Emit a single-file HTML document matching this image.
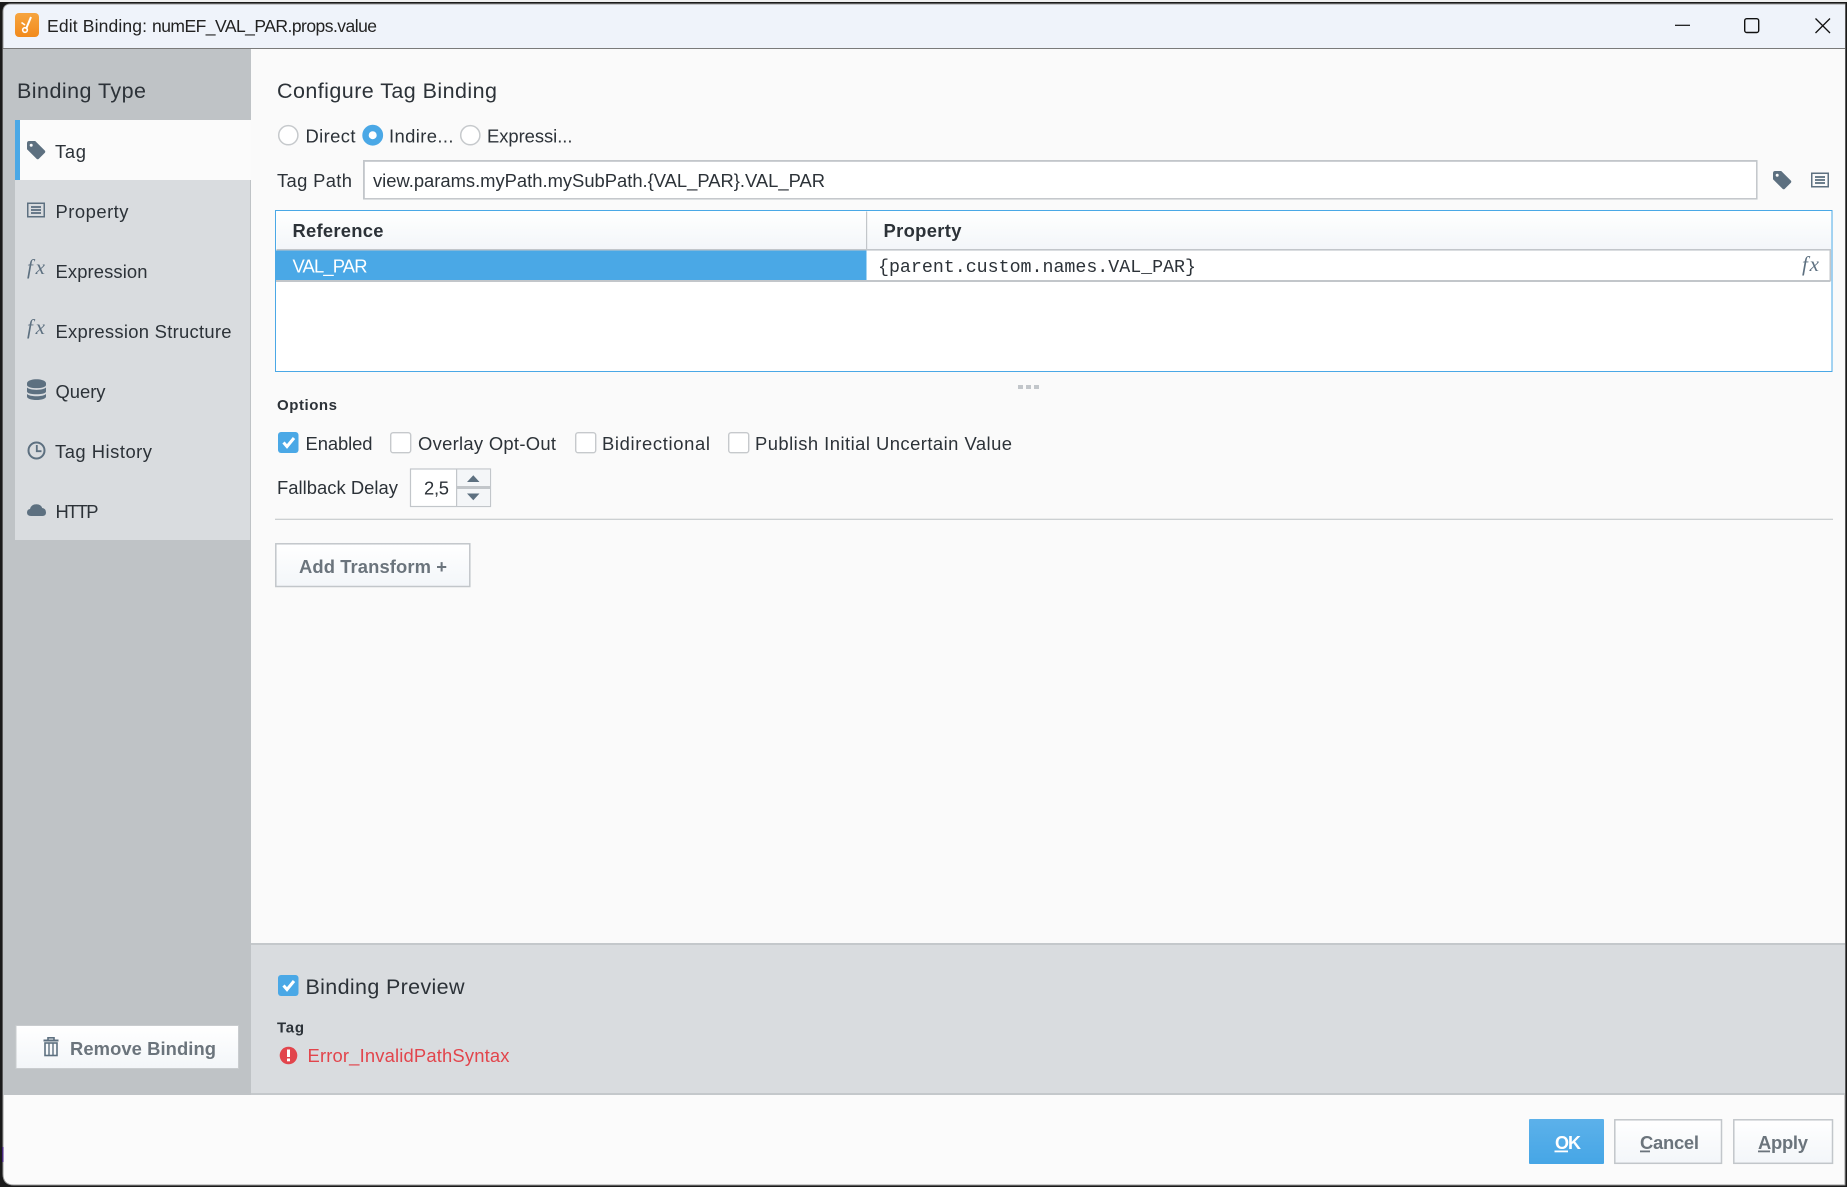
<!DOCTYPE html>
<html lang="en">
<head>
<meta charset="utf-8">
<title>Edit Binding</title>
<style>
html,body{margin:0;padding:0;background:#1a1a1a;width:1847px;height:1187px;overflow:hidden}
svg{display:block}
text{font-family:"Liberation Sans",Arial,sans-serif;fill:#2c3238;font-size:18.4px}
.b{font-weight:bold}
.g{fill:#6b747c;font-weight:bold}
.fx{font-family:"Liberation Serif",serif;font-style:italic;font-weight:normal;fill:#5d7080;font-size:21px}
.m{font-family:"Liberation Mono",monospace;font-size:18.3px}
.i{fill:#5d7080}
</style>
</head>
<body>
<svg width="1847" height="1187" viewBox="0 0 1847 1187" xmlns="http://www.w3.org/2000/svg">
<defs>
<linearGradient id="bt" x1="0" y1="0" x2="0" y2="1"><stop offset="0" stop-color="#ffffff"/><stop offset="1" stop-color="#f3f6f9"/></linearGradient>
<linearGradient id="ok" x1="0" y1="0" x2="0" y2="1"><stop offset="0" stop-color="#5cb1ea"/><stop offset="1" stop-color="#46a6e6"/></linearGradient>
<linearGradient id="or" x1="0" y1="0" x2="0" y2="1"><stop offset="0" stop-color="#f6a540"/><stop offset="1" stop-color="#f28a1c"/></linearGradient>
<path id="tag" d="M0 2.2Q0 0 2.2 0H8.2L18 9.8Q18.6 10.8 18 11.6L11.6 18Q10.7 18.6 9.8 18L0 8.2ZM4.2 2.8A1.5 1.5 0 1 0 4.21 5.8A1.5 1.5 0 1 0 4.2 2.8Z" fill-rule="evenodd"/>
<g id="list"><rect x=".75" y=".75" width="16.5" height="13.5" fill="none" stroke="#5d7080" stroke-width="1.5"/><rect x="4" y="3.6" width="10" height="1.8" fill="#5d7080"/><rect x="4" y="6.6" width="10" height="1.8" fill="#5d7080"/><rect x="4" y="9.6" width="10" height="1.8" fill="#5d7080"/></g>
<path id="chk" d="M5.5 10.5L9 14.5L16 6" fill="none" stroke="#fff" stroke-width="3"/>
</defs>

<!-- window frame -->
<rect width="1847" height="1187" fill="#1a1a1a"/>
<rect width="1847" height="2" fill="#f0f0f0"/>
<path d="M3 12Q3 4 11 4H1845V1185H14Q3 1185 3 1174Z" fill="#fbfbfb" stroke="#9a9a9a" stroke-width="1"/>

<!-- title bar -->
<path d="M3.5 48V12Q3.5 4.5 11 4.5H1845V48Z" fill="#eff3fa"/>
<rect x="3" y="48" width="1842" height="1.4" fill="#7a7a7a"/>
<rect x="15" y="13" width="24" height="24" rx="4" fill="url(#or)"/>
<path d="M31 17L26 29" stroke="#fff" stroke-width="2" fill="none"/>
<path d="M21.5 22.5L25 25" stroke="#fff" stroke-width="1.6" fill="none"/>
<circle cx="25" cy="30" r="2.3" fill="none" stroke="#fff" stroke-width="1.6"/>
<text x="47" y="32" style="font-size:17.5px;fill:#222" textLength="100">Edit Binding:</text>
<text x="152" y="32" style="font-size:17.5px;fill:#222" textLength="225">numEF_VAL_PAR.props.value</text>
<rect x="1675" y="24.7" width="15" height="1.2" fill="#111"/>
<rect x="1744.7" y="18.7" width="14" height="13.8" rx="2" fill="none" stroke="#111" stroke-width="1.4"/>
<path d="M1815.5 18.5L1830 33M1830 18.5L1815.5 33" stroke="#111" stroke-width="1.3" fill="none"/>

<!-- sidebar -->
<rect x="3" y="49" width="248" height="1046" fill="#bfc3c6"/>
<text x="17" y="98" style="font-size:21.5px" textLength="129">Binding Type</text>
<rect x="15" y="180" width="235" height="360" fill="#d9dcdf"/>
<rect x="15" y="120" width="236" height="60" fill="#fbfbfb"/>
<rect x="15" y="120" width="5" height="60" fill="#4aa8e6"/>

<use href="#tag" x="27" y="141" class="i"/>
<text x="55" y="158" textLength="31">Tag</text>
<use href="#list" x="27" y="202.5"/>
<text x="55.5" y="218" textLength="73">Property</text>
<text x="27" y="274" class="fx" textLength="18">fx</text>
<text x="55.5" y="278" textLength="92">Expression</text>
<text x="27" y="334" class="fx" textLength="18">fx</text>
<text x="55.5" y="338" textLength="176">Expression Structure</text>
<g class="i">
<path d="M27 383.5C27 377.8 46 377.8 46 383.5V385C46 389.2 27 389.2 27 385Z"/>
<path d="M27 387.5C30 390.6 43 390.6 46 387.5V391.5C46 395.2 27 395.2 27 391.5Z"/>
<path d="M27 394C30 397 43 397 46 394V396.5C46 401.2 27 401.2 27 396.5Z"/>
</g>
<text x="55.5" y="398" textLength="50">Query</text>
<circle cx="36.5" cy="450.5" r="8" fill="none" stroke="#5d7080" stroke-width="2"/>
<path d="M36.8 445V451.2H41.5" fill="none" stroke="#5d7080" stroke-width="1.8"/>
<text x="55" y="458" textLength="97">Tag History</text>
<path class="i" d="M31 516Q27 516 27 512.5Q27 509.5 30 509Q31 504.2 36.5 504.2Q41 504.2 42.2 508Q46 508.5 46 512.5Q46 516 42.5 516Z"/>
<text x="55.5" y="518" textLength="43">HTTP</text>

<!-- remove binding -->
<rect x="15.5" y="1025" width="223.5" height="44" fill="#c9cccf"/>
<rect x="16.5" y="1026" width="221.5" height="42" fill="url(#bt)"/>
<g fill="none" stroke="#5d7080">
<path d="M43.5 1040.5H58.5" stroke-width="2"/>
<path d="M48 1040V1037.8H54V1040" stroke-width="1.6"/>
<rect x="45" y="1043" width="12" height="12.5" stroke-width="1.6"/>
<path d="M49 1043.5V1055M53 1043.5V1055" stroke-width="1.4"/>
</g>
<text x="70" y="1055" class="g" textLength="146">Remove Binding</text>

<!-- main content -->
<rect x="251" y="49" width="1594" height="894" fill="#fafafa"/>
<text x="277" y="98" style="font-size:21.5px" textLength="220">Configure Tag Binding</text>

<circle cx="288.3" cy="135.2" r="9.6" fill="#fff" stroke="#c6c9cc" stroke-width="1.5"/>
<text x="305.5" y="142.5" textLength="50">Direct</text>
<circle cx="372.7" cy="135.2" r="7.2" fill="#fff" stroke="#4aa8e6" stroke-width="6.4"/>
<text x="389" y="142.5" textLength="64.5">Indire...</text>
<circle cx="470.3" cy="135.2" r="9.6" fill="#fff" stroke="#c6c9cc" stroke-width="1.5"/>
<text x="487" y="142.5" textLength="85.5">Expressi...</text>

<text x="277" y="187" textLength="75">Tag Path</text>
<rect x="363.8" y="160.8" width="1393" height="38" fill="#fff" stroke="#c2c6ca" stroke-width="1.5"/>
<rect x="363" y="160" width="1.8" height="39" fill="#c2c6ca"/>
<rect x="363" y="160" width="1394" height="1.8" fill="#c2c6ca"/>
<text x="373" y="187" textLength="452">view.params.myPath.mySubPath.{VAL_PAR}.VAL_PAR</text>
<use href="#tag" x="1773" y="171" class="i"/>
<use href="#list" x="1811" y="172.5"/>

<!-- table -->
<rect x="275.5" y="210.5" width="1556.5" height="161" fill="#fff" stroke="#4aa8e6" stroke-width="1"/>
<rect x="276.5" y="211.5" width="1554.5" height="38" fill="url(#bt)"/>
<rect x="276.5" y="249" width="1554.5" height="1.6" fill="#c2c6ca"/>
<rect x="866" y="211.5" width="1.2" height="38" fill="#c2c6ca"/>
<text x="292.5" y="237" class="b" textLength="91">Reference</text>
<text x="883.5" y="237" class="b" textLength="78">Property</text>
<rect x="276" y="250.5" width="590.5" height="29.5" fill="#4aa8e6"/>
<text x="292.5" y="272.5" style="fill:#fff" textLength="75">VAL_PAR</text>
<rect x="276" y="280" width="1554.5" height="2" fill="#c2c6ca"/>
<rect x="1829.5" y="250" width="1.6" height="31" fill="#c2c6ca"/>
<text x="878" y="272" class="m" textLength="318">{parent.custom.names.VAL_PAR}</text>
<text x="1802" y="271" class="fx" textLength="17">fx</text>

<rect x="1018" y="385" width="5" height="4" fill="#c2c6ca"/>
<rect x="1026" y="385" width="5" height="4" fill="#c2c6ca"/>
<rect x="1034" y="385" width="5" height="4" fill="#c2c6ca"/>

<text x="277" y="410" class="b" style="font-size:15px" textLength="60">Options</text>

<rect x="278" y="432" width="20.5" height="21" rx="3" fill="#4aa8e6"/>
<use href="#chk" x="278" y="432"/>
<text x="305.5" y="450" textLength="67">Enabled</text>
<rect x="390.7" y="432.7" width="20" height="20" rx="2.5" fill="#fff" stroke="#c6c9cc" stroke-width="1.4"/>
<text x="418" y="450" textLength="138">Overlay Opt-Out</text>
<rect x="575.7" y="432.7" width="20" height="20" rx="2.5" fill="#fff" stroke="#c6c9cc" stroke-width="1.4"/>
<text x="602" y="450" textLength="108">Bidirectional</text>
<rect x="728.7" y="432.7" width="20" height="20" rx="2.5" fill="#fff" stroke="#c6c9cc" stroke-width="1.4"/>
<text x="755" y="450" textLength="257">Publish Initial Uncertain Value</text>

<text x="277" y="494" textLength="121">Fallback Delay</text>
<rect x="410.5" y="469" width="80" height="37.5" fill="#fff" stroke="#c2c6ca" stroke-width="1.2"/>
<rect x="456" y="469.5" width="34" height="36.5" fill="#f4f6f8"/>
<rect x="456" y="469" width="1.2" height="37.5" fill="#c2c6ca"/>
<rect x="457" y="486" width="33" height="3" fill="#c2c6ca"/>
<path class="i" d="M467 482L473.3 475.2L479.5 482Z"/>
<path class="i" d="M467 493.5H479.5L473.3 500.3Z"/>
<text x="424" y="494.5" textLength="25">2,5</text>

<rect x="275" y="518.7" width="1558" height="1.2" fill="#c8cbce"/>

<rect x="275.8" y="543.8" width="194" height="42.7" fill="url(#bt)" stroke="#c2c6ca" stroke-width="1.5"/>
<text x="299" y="573" class="g" textLength="148">Add Transform +</text>

<!-- preview panel -->
<rect x="251" y="943" width="1594" height="152" fill="#c4c8cb"/>
<rect x="251" y="945" width="1594" height="148" fill="#d9dcdf"/>
<rect x="278" y="975" width="20.5" height="21" rx="3" fill="#4aa8e6"/>
<use href="#chk" x="278" y="975"/>
<text x="305.5" y="994" style="font-size:21.5px" textLength="159">Binding Preview</text>
<text x="277" y="1032.5" class="b" style="font-size:15px" textLength="27">Tag</text>
<circle cx="288.5" cy="1055.5" r="8.8" fill="#e2454c"/>
<rect x="287" y="1049.5" width="3" height="7.5" fill="#fff"/>
<rect x="287" y="1058.5" width="3" height="2.8" fill="#fff"/>
<text x="307.5" y="1062" style="fill:#e2454c" textLength="202">Error_InvalidPathSyntax</text>

<!-- footer -->
<rect x="1529" y="1119" width="75" height="45" rx="1" fill="url(#ok)"/>
<text x="1555" y="1149" class="b" style="fill:#fff;font-size:18px" textLength="26">OK</text>
<rect x="1554.5" y="1150.5" width="13.5" height="1.8" fill="#fff"/>
<rect x="1614.8" y="1119.8" width="106.7" height="43.5" fill="url(#bt)" stroke="#c2c6ca" stroke-width="1.5"/>
<text x="1640" y="1149" class="g" textLength="59">Cancel</text>
<rect x="1640" y="1150.5" width="10" height="1.8" fill="#6b747c"/>
<rect x="1733.8" y="1119.8" width="98.7" height="43.5" fill="url(#bt)" stroke="#c2c6ca" stroke-width="1.5"/>
<text x="1758" y="1149" class="g" textLength="50">Apply</text>
<rect x="1758" y="1150.5" width="12" height="1.8" fill="#6b747c"/>

<rect x="2" y="1147" width="1.5" height="15" fill="#4a2a80"/>
</svg>
</body>
</html>
